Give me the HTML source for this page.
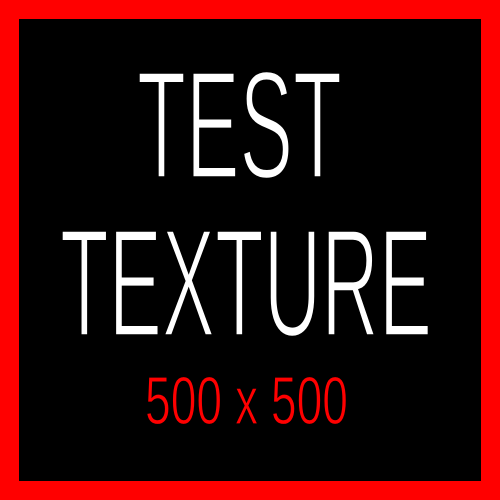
<!DOCTYPE html>
<html><head><style>html,body{margin:0;padding:0;background:#f00;}svg{display:block}</style></head>
<body>
<svg width="500" height="500" viewBox="0 0 500 500" xmlns="http://www.w3.org/2000/svg">
<rect x="0" y="0" width="500" height="500" fill="#ff0000"/>
<rect x="19" y="19" width="462" height="462" fill="#000"/>
<g font-family="Liberation Sans, sans-serif" stroke="#000">
<text x="137" y="178" font-size="154" fill="#fff" stroke-width="3.5" textLength="205" lengthAdjust="spacingAndGlyphs">TEST</text>
<text x="60" y="336" font-size="154" fill="#fff" stroke-width="3.5" textLength="372" lengthAdjust="spacingAndGlyphs">TEXTURE</text>
<text x="145" y="424" font-size="68" fill="#f00" stroke-width="1.2" textLength="203" lengthAdjust="spacingAndGlyphs">500 x 500</text>
</g>
</svg>
</body></html>
